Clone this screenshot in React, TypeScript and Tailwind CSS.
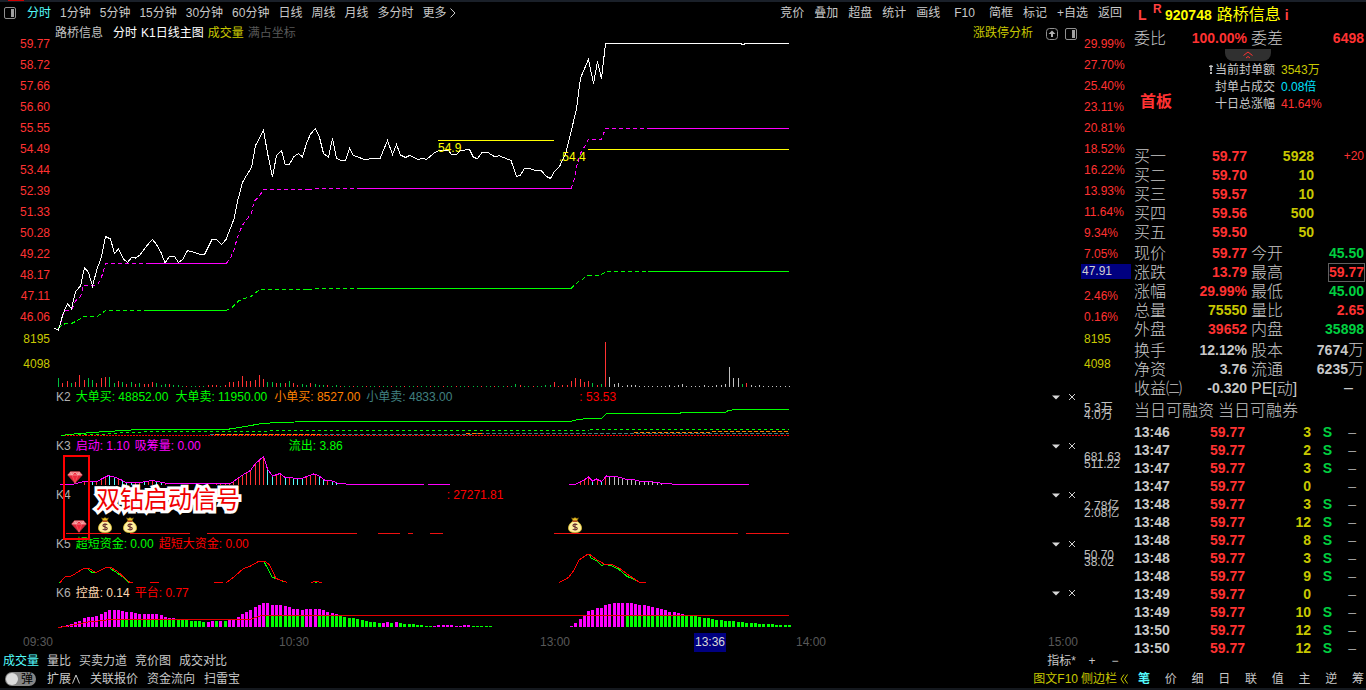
import { useState } from "react";
import type { ReactNode } from "react";
import clsx from "clsx";

type Point = [number, number];

const X0 = 55;
const PLOT_WIDTH = 1026;
const PANEL_HEIGHT = 31;

const minuteX = (i: number) => Math.round(58 + i * 4.275);
const leftOf = (x: number) => `${((x - X0) / PLOT_WIDTH) * 100}%`;

const periods = ["分时", "1分钟", "5分钟", "15分钟", "30分钟", "60分钟", "日线", "周线", "月线", "多分时"];
const tools = ["竞价", "叠加", "超盘", "统计", "画线", "F10", "简框", "标记", "+自选", "返回"];
const prices = ["59.77", "58.72", "57.66", "56.60", "55.55", "54.49", "53.44", "52.39", "51.33", "50.28", "49.22", "48.17", "47.11", "46.06"];
const percents = ["29.99%", "27.70%", "25.40%", "23.11%", "20.81%", "18.52%", "16.22%", "13.93%", "11.64%", "9.34%", "7.05%", "", "2.46%", "0.16%"];
const volumeScale = ["8195", "4098"];
const panelScale = [["5.3万", "4.0万"], ["681.63", "511.22"], ["2.78亿", "2.08亿"], ["50.70", "38.02"]];

const priceLine =
  "54.5,328.5 58.5,330 63,314 67.5,303.5 71.5,309 75.5,291.5 80.5,286 84.5,267.5 88.5,272.5 92.5,286 97,269 101.5,257 105.5,236.5 110.5,239 114.5,253.5 118.5,249 123.5,259 127.5,262.5 131.5,257.5 135.5,258 140,255 146.5,246 152.5,239.5 156.5,244.5 161.5,253.5 165,263 169.5,256.5 174.5,256.5 178.5,262.5 183,259 187.5,250.5 195,252.5 200,254.5 204.5,254.5 212,239.5 216.5,239.5 221.5,244.5 226,239.5 234,219 238,199.5 242.5,182.5 246.5,175.5 251.5,167.5 255.5,145.5 263.5,130.5 268,155.5 272.5,177 276.5,155.5 281.5,150.5 285,164 289,165 293.5,157 298.5,153.5 302.5,157 306.5,143.5 310.5,134 315.5,128.5 319.5,137.5 323.5,153.5 328.5,157 332.5,138.5 336.5,158 340.5,160.5 345.5,160.5 349.5,148.5 353.5,155.5 366,160 370,158.5 380,158.5 387.5,140.5 392.5,154.5 396.5,144.5 400.5,155 405.5,157.5 409.5,155.5 418.5,159.5 422,158 426.5,159.5 433.5,153.5 438.5,150.5 448.5,150.5 451.5,154.5 456.5,155 460,150.5 469.5,149.5 473.5,157.5 477.5,158.5 482,152.5 488,152.5 495,157 499,155.5 503.5,157.5 511,160.5 516.5,176.5 520.5,175 524.5,168.5 530,168.5 534,170 541.5,171 546.5,176.5 550.5,178.5 554.5,171.5 559.5,166.5 565.5,154 571.5,130 576.5,108.5 580.5,78 588.5,59.5 593.5,83.5 597.5,61.5 601.5,78.5 605.5,43.5 741,43.5 742,44.5 744,44.5 745,43.5 789,43.5";

const magentaDashed = [
  "58.5,330 63,315 65,310.5 71.5,310 75.5,301 80.5,296.5 83.5,285.5 97,285.5 101,279 105.5,263.5 148,263.5",
  "226,263.5 230,259 234,250 237.5,237 242.5,225 246.5,220 251.5,213 254,201.5 259.5,196 263.5,189.5 305,189.5",
  "315,188.5 357,188.5",
  "571,188.5 574.5,178.5 576.5,166.5 580.5,153.5 583.5,148.5 588.5,139.5 601.5,139.5 605.5,128.5 648,128.5",
];
const magentaSolid = ["148,263.5 226,263.5", "305,189.5 312,189.5", "357,188.5 571,188.5", "648,128.5 789,128.5"];

const greenDashed = [
  "58.5,328 60,326.5 65.5,323.5 71.5,323.5 77.5,320.5 83.5,316.5 97,316.5 101.5,313.5 105.5,310.5 148,310.5",
  "226,310.5 232.5,307 238.5,301 243.5,298.5 249.5,297.5 258.5,290.5 262,289.5 305,289.5",
  "315,288.5 357,288.5",
  "571,288.5 576,283.5 582,279.5 588,275.5 600,275.5 606,271.5 648,271.5",
];
const greenSolid = ["148,310.5 226,310.5", "305,289.5 312,289.5", "357,288.5 571,288.5", "648,271.5 789,271.5"];

// runs of minute volumes: start index and height + colour letter
const volumeRuns: [number, string][] = [
  [0, "9g 4r 6r 4g 5r 12r 7r 9g 7g 4r 9r 10r 10g 4g 6r 5g 3r 5g 3r 4g 3r 3r 5r 4g 2g 3g 3r 2g 2g"],
  [34, "1g 2r 2r 2r 1g 2r 5r 5r 6r 11r 6r 6r 7r 12r 8r 5g 5g 4r 4g 4r 6g 4r 2r 3g 2g 4r 3g 2g 2g 2r 1g 2g"],
  [107, "3g 2r 1g"],
  [114, "2g 2g 5r 1r 2r 2r 6r 9r 8r 5r 6r 4g 2r 3g 45r 10w 3w 4w 1w 2w 2w 2w"],
  [143, "2w 1w 2w 3w"],
  [151, "2w 1w 1w 2w 2w 3w 20w 9w 9w 3g 4r 2w 1w 2w"],
];

const volumeColors: Record<string, string> = { g: "#00c040", r: "#ff3232", w: "#c0c0c0" };

const volumes = Array.from({ length: 172 }, (_, i) => ({
  height: 1,
  color: i > 128 ? "w" : i % 3 === 0 ? "r" : "g",
}));
volumeRuns.forEach(([start, run]) =>
  run.split(" ").forEach((bar, n) => {
    volumes[start + n] = { height: parseInt(bar, 10), color: bar.slice(-1) };
  })
);

const k3Lines: Point[][] = [
  [[60, 484.5], [74, 484], [83.5, 481.5], [97, 481.5], [102.5, 478.5], [108.5, 475.5], [114, 477], [120.5, 479.5], [126, 482.5], [143, 482], [152.5, 480.5], [160, 482], [167, 483.5], [200, 484], [212, 483.5], [231.5, 483], [237.5, 478.5], [245, 473.5], [250.5, 470.5], [255, 464], [263.5, 456.5], [267.5, 469], [272.5, 476], [280, 473.5], [285, 477.5], [301.5, 478.5], [313.5, 474], [318.5, 475.5], [325, 480.5], [331, 480.5], [338.5, 483.5], [353.5, 484.5], [424, 484.5]],
  [[428, 484.5], [450, 484.5]],
  [[569, 484.5], [576, 484], [581.5, 481.5], [588.5, 477], [592.5, 481], [596.5, 479], [601.5, 481.5], [606.5, 476], [616.5, 476.5], [625, 479], [633, 479.5], [638.5, 481], [653, 482], [663, 483.5], [680.5, 484.5], [749, 484.5]],
];
const k3Cyan = new Set([8, 12, 13, 15, 16, 17, 20, 23, 24, 49, 50, 53, 55, 56, 57, 61, 62, 64, 65, 66, 125, 127]);

const k4Segments: Point[] = [[66, 121], [130, 190], [207, 357], [378, 400], [408, 413], [430, 443], [554, 738], [746, 789]];

const k5Red = [
  "60,582.5 65.5,576.5 71.5,576 83.5,568.5 89.5,568.5 95.5,572.5 100.5,570.5 105.5,567.5 111,567.5 117.5,571.5 130,582.5 133,582.5",
  "150,582.5 159,582.5",
  "214,582.5 223,582.5",
  "226.5,582.5 235,576 243.5,568.5 250.5,566 258.5,561.5 265.5,561.5 269.5,565 276,578.5 287.5,582.5",
  "311,582.5 315,581.5 322,582.5",
  "559.5,582.5 568.5,577.5 574,570 579,560 586.5,555 590,554.5 596.5,559.5 605,564.5 611.5,564.5 618.5,567.5 630,576 639,582 646,582.5",
];
const k5Green = [
  "59,582.5 62,580.5",
  "88.5,569.5 92,572.5 96.5,572.5",
  "110,568.5 115,571.5 125,578.5 129,582.5",
  "264.5,562.5 272,577 283.5,581.5",
  "314,581.5 317,582.5",
  "589.5,555 591.5,558.5 596.5,560.5 601.5,565.5 605,564.5 611,565.5 618.5,569 626.5,576 640,582.5",
];

const k6Runs: { start: number; heights: number[] }[] = [
  {
    start: 1,
    heights: [1, 2, 3, 5, 6, 9, 10, 10, 11, 13, 15, 17, 17, 17, 16, 15, 15, 14, 13, 13, 13, 13, 13, 12, 10, 9, 9, 8, 7, 7, 6, 6, 6, 5, 5, 6, 6, 6, 6, 7, 8, 10, 13, 15, 17, 20, 22, 24, 24, 22, 22, 22, 21, 20, 18, 18, 17, 18, 18, 18, 18, 17, 15, 14, 13, 11, 10, 9, 9, 8, 7, 6, 5, 5, 4, 4, 5, 4, 5, 4, 3, 3, 3, 2, 2, 1, 1, 1, 2, 2, 2, 2, 1, 1, 2, 2, 1, 1, 1, 1, 1],
  },
  {
    start: 120,
    heights: [1, 4, 8, 12, 16, 17, 19, 19, 22, 23, 24, 24, 24, 24, 24, 23, 22, 22, 21, 20, 19, 18, 17, 15, 15, 14, 13, 12, 11, 11, 10, 9, 9, 8, 7, 7, 6, 6, 6, 5, 5, 4, 4, 4, 3, 3, 3, 3, 2, 2, 2, 2],
  },
];
const k6Line = "58.5,627.5 68.5,626 80,623.5 88.5,622 103.5,620.5 108.5,619.5 250,619.5 255,617.5 262,615.5 789,615.5";

const isK6Green = (i: number) =>
  (i >= 15 && i <= 34) || i === 37 || i === 39 || (i >= 49 && i <= 57) || (i >= 61 && i <= 75) || i === 78 || (i >= 80 && i <= 87) || (i >= 97 && i <= 101) || i >= 133;

const bids = [
  { label: "买一", price: "59.77", volume: "5928", change: "+20" },
  { label: "买二", price: "59.70", volume: "10", change: "" },
  { label: "买三", price: "59.57", volume: "10", change: "" },
  { label: "买四", price: "59.56", volume: "500", change: "" },
  { label: "买五", price: "59.50", volume: "50", change: "" },
];

const RED = "text-[#ff3232]";
const GREEN = "text-[#00d040]";
const YELLOW = "text-[#c8c800]";
const GRAY = "text-[#c8c8c8]";

const quotes = [
  ["现价", "59.77", RED, "今开", "45.50", GREEN],
  ["涨跌", "13.79", RED, "最高", "59.77", RED],
  ["涨幅", "29.99%", RED, "最低", "45.00", GREEN],
  ["总量", "75550", YELLOW, "量比", "2.65", RED],
  ["外盘", "39652", RED, "内盘", "35898", GREEN],
];

const finance = [
  ["换手", "12.12%", "股本", "7674", "万"],
  ["净资", "3.76", "流通", "6235", "万"],
  ["收益㈡", "-0.320", "PE[动]", "", "–"],
];

const ticks = [
  ["13:46", 3], ["13:47", 2], ["13:47", 3], ["13:47", 0], ["13:48", 3], ["13:48", 12], ["13:48", 8],
  ["13:48", 3], ["13:48", 9], ["13:49", 0], ["13:49", 10], ["13:50", 12], ["13:50", 12],
] as [string, number][];

function Lines({ items, color, dash }: { items: string[]; color: string; dash?: string }) {
  return (
    <>
      {items.map((points) => (
        <polyline key={points} points={points} fill="none" stroke={color} strokeDasharray={dash} vectorEffect="non-scaling-stroke" />
      ))}
    </>
  );
}

function Plot({ top, height = PANEL_HEIGHT, className, children }: { top: number; height?: number; className: string; children: ReactNode }) {
  return (
    <svg
      viewBox={`${X0} ${top} ${PLOT_WIDTH} ${height}`}
      preserveAspectRatio="none"
      shapeRendering="crispEdges"
      className={clsx("block w-full overflow-visible", className)}
      aria-hidden="true"
    >
      {children}
    </svg>
  );
}

function Panel({ name, top, labels, children }: { name: string; top: number; labels: ReactNode; children: ReactNode }) {
  return (
    <section>
      <div className="flex h-[18px] items-center pl-px leading-[18px] whitespace-nowrap">
        <h3 className="mr-[5px] text-[#b0b0b0]">{name}</h3>
        {labels}
        <div className="ml-auto flex items-center gap-[8px] pr-[5px]">
          <button aria-label={`${name} 菜单`}>
            <svg viewBox="0 0 8 8" className="block h-[8px] w-[8px] fill-[#d8d8d8]"><path d="M0 2.5h8L4 6.5z" /></svg>
          </button>
          <button aria-label={`关闭 ${name}`}>
            <svg viewBox="0 0 8 8" className="block h-[8px] w-[8px] stroke-[#d0d0d0]"><path d="M1 1l6 6M7 1L1 7" /></svg>
          </button>
        </div>
      </div>
      <Plot top={top} className="h-[31px]">{children}</Plot>
    </section>
  );
}

function Diamond({ x, className }: { x: number; className: string }) {
  return (
    <svg viewBox="0 0 16 13" className={clsx("absolute h-[13px] w-[16px]", className)} style={{ left: leftOf(x) }} aria-hidden="true">
      <path d="M3.5.5h9L15.5 4 8 12.5.5 4z" fill="#e02438" stroke="#8e2a30" strokeWidth=".6" />
      <path d="M3.5.8h9L15 4H1z" fill="#ec8488" />
      <path d="M5 4l3-3 3 3-3 8z" fill="#f0283c" />
      <path d="M3.5 1L5 4l3-3 3 3 1.500-3M1 4h14" fill="none" stroke="#ffc0c0" strokeWidth=".6" />
      <path d="M5 4l3 8 3-8" fill="none" stroke="#ff7a80" strokeWidth=".5" />
    </svg>
  );
}

function MoneyBag({ x }: { x: number }) {
  return (
    <svg viewBox="0 0 14 16" className="absolute top-[129px] h-[16px] w-[14px]" style={{ left: leftOf(x) }} aria-hidden="true">
      <path d="M3.500.8L5 1.500 7 .6l2 .9 1.500-.7L9 4H5z" fill="#e8c020" stroke="#7a5a10" strokeWidth=".5" />
      <path d="M5 4.300C2 6 .5 8.500.5 11c0 3 2 4.500 6.500 4.500s6.500-1.500 6.500-4.500C13.500 8.500 12 6 9 4.300z" fill="#fff0a0" stroke="#e0c030" strokeWidth=".8" />
      <path d="M4.600 4.200h4.800" stroke="#b03020" strokeWidth="1.200" />
      <path d="M9.300 7.800C8.800 7 5 6.600 4.900 8.500c0 1.900 4.400 1 4.400 3 0 1.900-4 1.600-4.600.5M7 6.200v7.400" fill="none" stroke="#6a3030" strokeWidth="1.100" />
    </svg>
  );
}

function SplitIcon() {
  return (
    <svg viewBox="0 0 12 12" className="block h-[12px] w-[12px]" aria-hidden="true">
      <rect x=".5" y=".5" width="11" height="11" rx="1.500" fill="none" stroke="#909090" />
      <path d="M7 2h3v8H7z" fill="#a0a0a0" />
    </svg>
  );
}

function PriceAxis() {
  return (
    <div className="w-[55px] shrink-0 pt-[10px] pr-[5px] text-right">
      <ul className="text-[#ff3232]">
        {prices.map((p) => <li key={p} className="h-[21px] leading-[22px]">{p}</li>)}
      </ul>
      <ul className="text-[#c8c800]">
        {volumeScale.map((v) => <li key={v} className="h-[25px] leading-[25px]">{v}</li>)}
      </ul>
    </div>
  );
}

function PercentAxis() {
  return (
    <div className="w-[50px] shrink-0 pt-[10px]">
      <ul className="text-[#ff3232]">
        {percents.map((p, i) => (
          <li key={i} className="h-[21px] pl-[3px] leading-[22px]">
            {p || <span className="-ml-[3px] block h-[15px] bg-[#000080] pl-px leading-[15px] text-[#d0d0d0]">47.91</span>}
          </li>
        ))}
      </ul>
      <ul className="mb-[11px] pl-[3px] text-[#c8c800]">
        {volumeScale.map((v) => <li key={v} className="h-[25px] leading-[25px]">{v}</li>)}
      </ul>
      {panelScale.map(([high, low]) => (
        <div key={high} className="h-[49px] pt-[17px] pl-[3px] leading-[7px] text-[#c0c0c0]">
          <p>{high}</p>
          <p>{low}</p>
        </div>
      ))}
    </div>
  );
}

function k3Bars() {
  const bars: { x: number; y: number; color: string }[] = [];
  for (let i = 6; i < 147; i++) {
    const x = minuteX(i) + 0.5;
    k3Lines.forEach((line) => {
      for (let n = 1; n < line.length; n++) {
        const [x1, y1] = line[n - 1];
        const [x2, y2] = line[n];
        if (x < x1 || x >= x2) continue;
        const y = y1 + ((y2 - y1) * (x - x1)) / (x2 - x1);
        if (y < 483.4) bars.push({ x, y, color: i > 128 ? "#c0c0c0" : k3Cyan.has(i) ? "#54fcfc" : "#ff3232" });
      }
    });
  }
  return bars;
}

function Chart() {
  return (
    <div className="min-w-0 flex-1">
      <div className="flex h-[19px] items-center pt-[2px] leading-[19px] whitespace-nowrap">
        <span className="mr-[10px] text-[#c0c0c0]">路桥信息</span>
        <span className="mr-[4px] text-white">分时</span>
        <span className="mr-[4px] text-white">K1日线主图</span>
        <span className="mr-[4px] text-[#c8c800]">成交量</span>
        <span className="text-[#585858]">满占坐标</span>
        <a href="#analysis" className="ml-auto text-[#c8c800]">涨跌停分析</a>
        <button className="ml-[13px]" aria-label="上移">
          <svg viewBox="0 0 12 12" className="block h-[12px] w-[12px]">
            <rect x=".5" y=".5" width="11" height="11" rx="3" fill="none" stroke="#909090" />
            <path d="M6 2.500L9.500 6H7v3H5V6H2.500z" fill="#b0b0b0" />
          </svg>
        </button>
        <button className="mr-[4px] ml-[7px]" aria-label="侧栏"><SplitIcon /></button>
      </div>

      <div className="relative">
        <Plot top={42} height={346} className="h-[346px]">
          {volumes.map((v, i) => (
            <rect key={i} x={minuteX(i)} y={387 - v.height} width="1" height={v.height} fill={volumeColors[v.color]} />
          ))}
          <Lines items={greenDashed} color="#00ff00" dash="4 3" />
          <Lines items={greenSolid} color="#00ff00" />
          <Lines items={magentaDashed} color="#ff00ff" dash="4 3" />
          <Lines items={magentaSolid} color="#ff00ff" />
          <Lines items={[priceLine]} color="#ffffff" />
          <Lines items={["438,140.5 554,140.5", "588,149.5 789,149.5"]} color="#ffff00" />
        </Plot>
        <span className="absolute top-[98px] leading-[16px] text-[#ffff00]" style={{ left: leftOf(438) }}>54.9</span>
        <span className="absolute top-[107px] leading-[16px] text-[#ffff00]" style={{ left: leftOf(559) }}>.54.4</span>
      </div>

      <div className="relative">
        <Panel
          name="K2"
          top={406}
          labels={
            <>
              <span className="mr-[7px] text-[#00ff00]">大单买: 48852.00</span>
              <span className="mr-[7px] text-[#00ff00]">大单卖: 11950.00</span>
              <span className="mr-[6px] text-[#ff8000]">小单买: 8527.00</span>
              <span className="mr-[127px] text-[#408080]">小单卖: 4833.00</span>
              <span className="text-[#ff0000]">: 53.53</span>
            </>
          }
        >
          <Lines items={["210,434.5 466,434.5 483,433.5 789,433.5"]} color="#408080" dash="4 2" />
          <Lines items={["215,434.5 320,434.5", "466,433.5 483,433.5", "634,432.5 710,432.5", "712,431.5 789,431.5"]} color="#ff8000" dash="4 2" />
          <Lines items={["61,435.5 789,435.5"]} color="#ff0000" dash="2 1" />
          <Lines items={["78,435 105,434 125,432.5 160,431.5 260,431.5 275,430.5 589,430.5", "590,429.5 789,429.5"]} color="#00ff00" dash="3 3" />
          <Lines
            items={["61,435.5 78,433.5 93.5,432.5 105,431.5 125,430.5 137.5,429.5 226.5,429.5 245,426.5 262,423.5 278,422.5 312,421.5 571,421.5 573,420.5 586,418.5 601.5,418.5 606.5,413.5 680,413.5 681,412.5 725.5,412.5 728,410.5 736,409.5 789,409.5"]}
            color="#00ff00"
          />
        </Panel>

        <Panel
          name="K3"
          top={455}
          labels={
            <>
              <span className="mr-[5px] text-[#ff00ff]">启动: 1.10</span>
              <span className="mr-[88px] text-[#ff00ff]">吸筹量: 0.00</span>
              <span className="text-[#00ff00]">流出: 3.86</span>
            </>
          }
        >
          {k3Bars().map((bar) => (
            <rect key={bar.x} x={bar.x - 0.5} y={bar.y} width="1" height={485 - bar.y} fill={bar.color} />
          ))}
          <Lines items={k3Lines.map((line) => line.join(" "))} color="#ff00ff" />
        </Panel>

        <Panel name="K4" top={504} labels={<span className="ml-[371px] text-[#ff0000]">: 27271.81</span>}>
          {k4Segments.map(([from, to]) => (
            <rect key={from} x={from} y="533" width={to - from} height="1" fill="#f01010" />
          ))}
        </Panel>

        <Panel
          name="K5"
          top={553}
          labels={
            <>
              <span className="mr-[5px] text-[#00ff00]">超短资金: 0.00</span>
              <span className="text-[#ff0000]">超短大资金: 0.00</span>
            </>
          }
        >
          <Lines items={k5Green} color="#00ff00" />
          <Lines items={k5Red} color="#ff0000" />
        </Panel>

        <Panel
          name="K6"
          top={602}
          labels={
            <>
              <span className="mr-[5px] text-[#ffd8b0]">控盘: 0.14</span>
              <span className="text-[#ff0000]">平台: 0.77</span>
            </>
          }
        >
          {k6Runs.flatMap(({ start, heights }) =>
            heights.map((h, n) => {
              const i = start + n;
              const low = isK6Green(i) ? Math.min(h, i > 45 ? 11 : 7) : 0;
              return (
                <g key={i}>
                  <rect x={minuteX(i) - 1} y={627 - h} width="3" height={h} fill="#ff00ff" />
                  <rect x={minuteX(i) - 1} y={627 - low} width="3" height={low} fill="#00ff00" />
                </g>
              );
            })
          )}
          <Lines items={[k6Line]} color="#e00000" />
        </Panel>

        <Diamond x={67} className="top-[83px]" />
        <Diamond x={71} className="top-[132px]" />
        <MoneyBag x={98} />
        <MoneyBag x={123} />
        <MoneyBag x={568} />
        <div className="absolute top-[67px] h-[85px] w-[27px] border-2 border-[#ff0000]" style={{ left: leftOf(63) }} />
        <strong
          className="absolute top-[98px] text-2xl leading-[28px] font-normal whitespace-nowrap text-[#f00000] [paint-order:stroke] [stroke-linejoin:round] [-webkit-text-stroke:6px_white]"
          style={{ left: leftOf(96) }}
        >
          双钻启动信号
        </strong>
      </div>
    </div>
  );
}

function Sidebar() {
  const label = "text-left text-base font-light text-[#c8c8c8]";
  const cols = (
    <colgroup>
      <col className="w-[50px]" />
      <col className="w-[63px]" />
      <col className="w-[46px]" />
      <col />
    </colgroup>
  );

  return (
    <aside className="flex w-[235px] shrink-0 flex-col pr-[2px] pl-[3px] text-sm font-bold whitespace-nowrap">
      <h1 className="flex h-[26px] items-center pl-[4px] leading-[26px] text-[#ffff00]">
        <span className="w-[15px] text-[#ff4040]">L</span>
        <sup className="w-[12px] text-xs text-[#ff4040]">R</sup>
        <span className="mr-[5px]">920748</span>
        <span className="mr-[4px] text-base font-normal">路桥信息</span>
        <span className="text-[#ff4040]">i</span>
      </h1>

      <div className="flex h-[21px] items-center leading-[21px]">
        <span className={clsx("w-[50px]", label)}>委比</span>
        <span className="w-[63px] text-right text-[#ff3232]">100.00%</span>
        <span className={clsx("pl-[4px]", label)}>委差</span>
        <span className="ml-auto text-[#ff3232]">6498</span>
      </div>
      <button className="ml-[91px] flex h-[12px] w-[46px] items-center justify-center rounded-b-lg bg-[#303030]" aria-label="收起">
        <svg viewBox="0 0 10 8" className="h-[8px] w-[10px] fill-none stroke-[#ff3232]"><path d="M.5 4.500L5 1l4.500 3.500M3 7l2-1.500L7 7" /></svg>
      </button>

      <div className="flex h-[86px] text-xs font-normal">
        <strong className="w-[74px] pt-[32px] pl-[6px] text-base leading-[18px] text-[#ff3232]">首板</strong>
        <dl className="grid auto-rows-[17px] grid-cols-[73px_1fr] content-start leading-[18px] text-[#c8c8c8]">
          <dt className="flex items-center justify-end gap-[2px] pr-[6px]">
            <svg viewBox="0 0 4 9" className="h-[9px] w-[4px] fill-[#c0c0c0]"><path d="M0 1l2-1 2 1v1L2.800 2v4H1.200V2H0zM1 7h2v2H1z" /></svg>
            当前封单额
          </dt>
          <dd className="text-[#c8c800]">3543万</dd>
          <dt className="pr-[6px] text-right">封单占成交</dt>
          <dd className="text-[#00e0ff]">0.08倍</dd>
          <dt className="pr-[6px] text-right">十日总涨幅</dt>
          <dd className="text-[#ff3232]">41.64%</dd>
        </dl>
      </div>

      <table className="w-full table-fixed leading-[19px]">
        <colgroup>
          <col className="w-[50px]" />
          <col className="w-[63px]" />
          <col className="w-[67px]" />
          <col />
        </colgroup>
        <tbody>
          {bids.map((b) => (
            <tr key={b.label} className="h-[19px] text-right">
              <th className={clsx("p-0 leading-[19px]", label)}>{b.label}</th>
              <td className="p-0 text-[#ff3232]">{b.price}</td>
              <td className="p-0 text-[#c8c800]">{b.volume}</td>
              <td className="p-0 text-xs leading-[19px] font-normal text-[#ff3232]">{b.change}</td>
            </tr>
          ))}
        </tbody>
      </table>

      <table className="mt-[2px] w-full table-fixed leading-[19px]">
        {cols}
        <tbody>
          {quotes.map(([name, value, color, name2, value2, color2]) => (
            <tr key={name} className="h-[19px] text-right">
              <th className={clsx("p-0 leading-[19px]", label)}>{name}</th>
              <td className={clsx("p-0", color)}>{value}</td>
              <th className={clsx("p-0 pl-[4px] leading-[19px]", label)}>{name2}</th>
              <td className={clsx("p-0", color2)}>
                {name2 === "最高" ? <span className="inline-block leading-[17px] outline outline-[#606060]">{value2}</span> : value2}
              </td>
            </tr>
          ))}
        </tbody>
      </table>

      <table className="mt-[2px] w-full table-fixed leading-[19px]">
        {cols}
        <tbody>
          {finance.map(([name, value, name2, value2, unit]) => (
            <tr key={name} className={clsx("h-[19px] text-right", GRAY)}>
              <th className={clsx("p-0 leading-[19px]", label)}>{name}</th>
              <td className="p-0">{value}</td>
              <th className={clsx("p-0 pl-[4px] leading-[19px]", label)}>{name2}</th>
              <td className={clsx("p-0", !value2 && "pr-[11px]")}>
                {value2}
                <span className="text-base leading-none font-light">{unit}</span>
              </td>
            </tr>
          ))}
        </tbody>
      </table>

      <p className="flex h-[25px] gap-[4px] text-base leading-[25px] font-light text-[#c8c8c8]">
        <span>当日可融资</span>
        <span>当日可融券</span>
      </p>

      <table className="w-full table-fixed leading-[18px]">
        <colgroup>
          <col className="w-[50px]" />
          <col className="w-[61px]" />
          <col className="w-[66px]" />
          <col className="w-[21px]" />
          <col />
        </colgroup>
        <tbody>
          {ticks.map(([time, volume], i) => (
            <tr key={i} className="h-[18px] text-right">
              <td className="p-0 text-left text-[#c8c8c8]">{time}</td>
              <td className="p-0 text-[#ff3232]">59.77</td>
              <td className="p-0 text-[#c8c800]">{volume}</td>
              <td className="p-0 text-[#00d040]">{volume > 0 && "S"}</td>
              <td className="p-0 pr-[8px] font-normal text-[#a0a0a0]">–</td>
            </tr>
          ))}
        </tbody>
      </table>

      <nav className="mt-auto flex h-[18px] justify-between pl-[4px] text-xs font-normal text-[#c8c8c8]">
        {["笔", "价", "细", "日", "联", "值", "主", "逆", "筹"].map((t, i) => (
          <button key={t} className={clsx("leading-[18px]", i === 0 && "font-bold text-[#54fcfc]")}>{t}</button>
        ))}
      </nav>
    </aside>
  );
}

export default function App() {
  const [popup, setPopup] = useState(false);

  return (
    <div className="flex min-h-screen flex-col border-b-2 border-[#14181e] bg-black font-['Liberation_Sans','Noto_Sans_CJK_SC',sans-serif] text-xs text-[#c8c8c8]">
      <div className="h-[2px] bg-[#1a2029] pl-[8px]">
        <div className="h-px w-[16px] bg-[#d00000]" />
      </div>
      <div className="flex flex-1">
        <main className="flex min-w-0 flex-1 flex-col">
          <nav className="flex h-[21px] items-center justify-between pt-px pr-[9px] pl-[4px] leading-[20px] whitespace-nowrap">
            <div className="flex items-center gap-[9px]">
              <button className="mr-[2px]" aria-label="布局"><SplitIcon /></button>
              {periods.map((p, i) => (
                <button key={p} className={clsx(i === 0 && "text-[#54fcfc]")}>{p}</button>
              ))}
              <button className="flex items-center gap-[3px]">
                更多
                <svg viewBox="0 0 6 10" className="h-[10px] w-[6px] fill-none stroke-[#c8c8c8]"><path d="M.5.5L5 5 .5 9.500" /></svg>
              </button>
            </div>
            <div className="flex items-center gap-[10px]">
              {tools.map((t) => (
                <button key={t} className={clsx(t === "F10" && "px-[4px]")}>{t}</button>
              ))}
            </div>
          </nav>

          <div className="flex">
            <PriceAxis />
            <Chart />
            <PercentAxis />
          </div>

          <div className="grid h-[19px] grid-cols-[256fr_261fr_154fr_102fr_252fr_83fr] pl-[23px] leading-[19px] text-[#585858]">
            <time>09:30</time>
            <time>10:30</time>
            <time>13:00</time>
            <time className="justify-self-start bg-[#000080] px-px text-[#d8d8d8]">13:36</time>
            <time>14:00</time>
            <time>15:00</time>
          </div>

          <div className="mt-auto flex h-[18px] items-center gap-[8px] pr-[9px] pl-[3px] leading-[18px]">
            {["成交量", "量比", "买卖力道", "竞价图", "成交对比"].map((t, i) => (
              <button key={t} className={clsx(i === 0 && "text-[#54fcfc]")}>{t}</button>
            ))}
            <button className="ml-auto">指标*</button>
            <button className="w-[16px]" aria-label="增加指标">+</button>
            <button className="w-[14px]" aria-label="减少指标">−</button>
          </div>
          <div className="flex h-[18px] items-center gap-[9px] pr-[3px] pl-[5px] leading-[18px]">
            <label className="mr-[2px] flex h-[14px] w-[31px] items-center rounded-full bg-[#858585] px-px leading-[14px] text-black">
              <input
                type="checkbox"
                checked={popup}
                onChange={(e) => setPopup(e.target.checked)}
                className="mr-[3px] h-[12px] w-[12px] appearance-none rounded-full bg-[#dcdcdc]"
              />
              弹
            </label>
            <button className="flex items-center">
              扩展
              <svg viewBox="0 0 10 10" className="h-[10px] w-[10px] fill-none stroke-[#c8c8c8]"><path d="M1.500 9.500L5 1l3.500 8.500" /></svg>
            </button>
            <button>关联报价</button>
            <button>资金流向</button>
            <button>扫雷宝</button>
            <div className="ml-auto flex gap-[3px] text-[#c8c800]">
              <button>图文F10</button>
              <button className="flex items-center gap-[3px]">
                侧边栏
                <svg viewBox="0 0 8 10" className="h-[10px] w-[8px] fill-none stroke-[#c8c800]"><path d="M4 .5L1 5l3 4.500M7.500.5l-3 4.500 3 4.500" /></svg>
              </button>
            </div>
          </div>
        </main>
        <Sidebar />
      </div>
    </div>
  );
}
